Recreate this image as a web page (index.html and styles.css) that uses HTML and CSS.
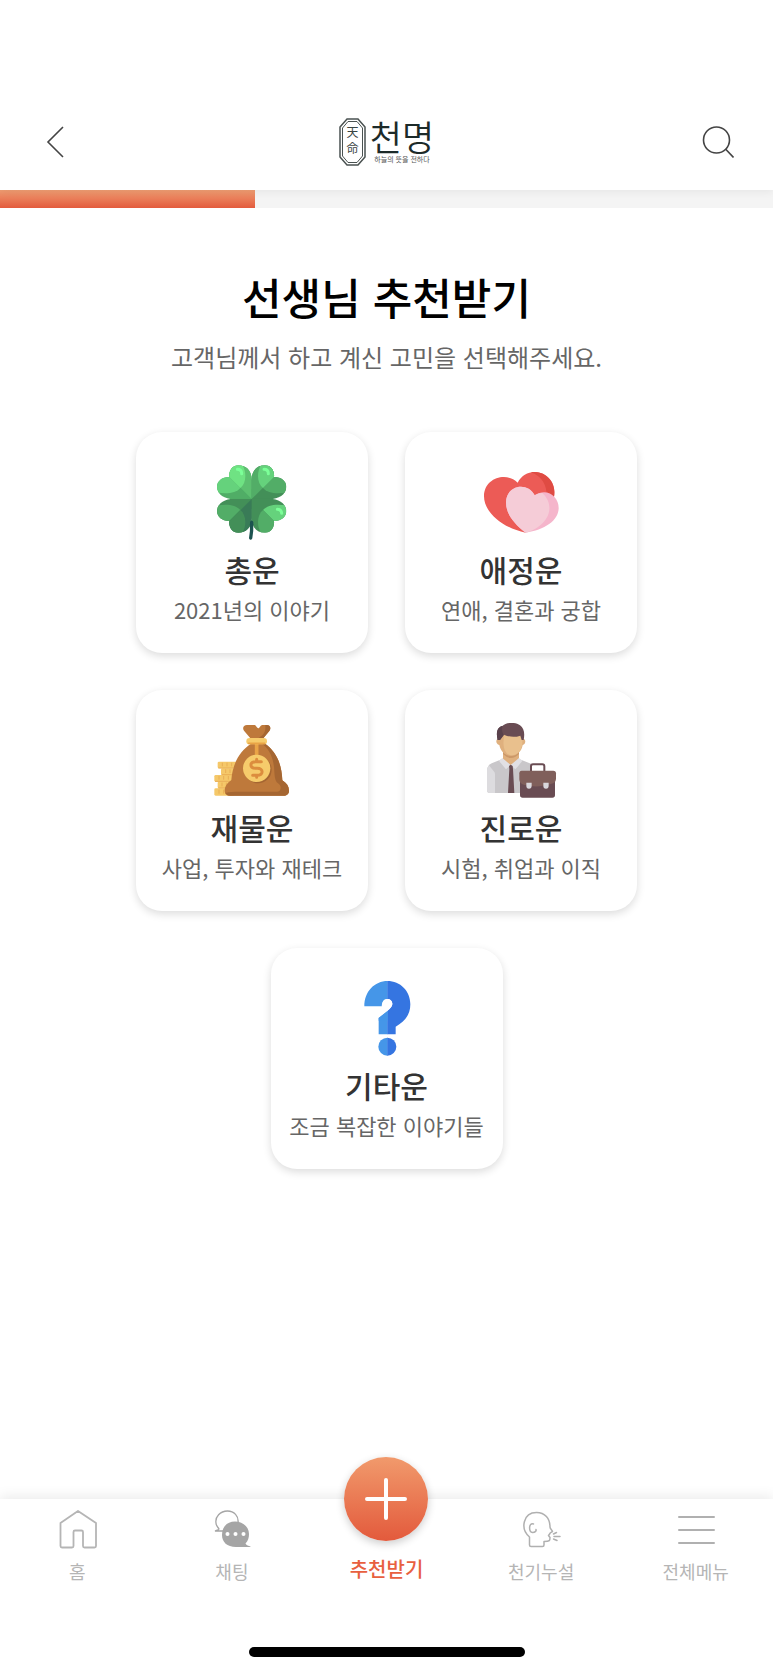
FILE: index.html
```
<!DOCTYPE html>
<html lang="ko">
<head>
<meta charset="utf-8">
<meta name="viewport" content="width=device-width, initial-scale=1">
<title>천명 - 선생님 추천받기</title>
<link rel="stylesheet" href="styles.css">
</head>
<body>
<header class="header">
  <button class="icon-button" type="button" aria-label="뒤로">
    <svg width="32" height="32" viewBox="0 0 32 32" fill="none" stroke="#444" stroke-width="1.6"><path d="M24 1 9 16 24 31"/></svg>
  </button>
  <a class="logo" href="#" aria-label="천명">
    <svg class="logo-emblem" width="27" height="48" viewBox="0 0 27 48" fill="none" stroke="#4a5251">
      <path d="M8 1h11l7 8v30l-7 8H8l-7-8V9z" stroke-width="1.500"/>
      <path d="M9 3.500h9l5.500 6.500v28L18 44.500H9L3.500 38V10z" stroke-width="1"/>
      <text class="logo-hanja" x="13.500" y="19">天</text>
      <text class="logo-hanja" x="13.500" y="35">命</text>
    </svg>
    <span class="logo-words">
      <span class="logo-name">천명</span>
      <span class="logo-tagline">하늘의 뜻을 전하다</span>
    </span>
  </a>
  <button class="icon-button" type="button" aria-label="검색">
    <svg width="32" height="32" viewBox="0 0 32 32" fill="none" stroke="#444" stroke-width="1.600"><circle cx="14.500" cy="14" r="13"/><path d="m23.500 23 8 8.500"/></svg>
  </button>
</header>
<div class="progress" role="progressbar" aria-valuenow="33" aria-valuemin="0" aria-valuemax="100" aria-label="진행률"><div class="progress-fill" style="width:33%"></div></div>

<main class="main">
  <h1 class="title">선생님 추천받기</h1>
  <p class="subtitle">고객님께서 하고 계신 고민을 선택해주세요.</p>
  <div class="cards">
    <button class="card" type="button">
      <svg class="card-icon" viewBox="270 135 225 225" aria-hidden="true">
        <defs>
          <path id="leaf" d="M380.500 237.500V180C380 150 362 136 340 136c-18 0-29 16-27 35-20-1-37 12-37 29 0 24 24 37 50 37.500z"/>
          <clipPath id="leafClip"><use href="#leaf"/></clipPath>
        </defs>
        <path fill="#4c9f62" d="M350 207h60v60h-60z"/>
        <g clip-path="url(#leafClip)"><path fill="#50ad66" d="M270 127h111v111H270z"/><path fill="#5dbf70" d="M270 127h111v111z"/><path fill="#65d27c" d="m304 162 42 42c-15 17-44 19-80 12v-54z"/><path fill="#6fe283" d="M304 162v-40h39c24 26 23 66 3 82z"/></g>
        <g transform="translate(760 0) scale(-1 1)" clip-path="url(#leafClip)"><path fill="#438f58" d="M270 127h111v111H270z"/><path fill="#52ad67" d="M270 127h111v111z"/><path fill="#52ad67" d="m304 162 42 42c-15 17-44 19-80 12v-54z"/><path fill="#65d27c" d="M304 162v-40h39c24 26 23 66 3 82z"/></g>
        <g transform="translate(0 474) scale(1 -1)" clip-path="url(#leafClip)"><path fill="#438f58" d="M270 127h111v111H270z"/><path fill="#397b57" d="M270 127h111v111z"/><path fill="#52ad67" d="m304 162 42 42c-15 17-44 19-80 12v-54z"/><path fill="#438f58" d="M304 162v-40h39c24 26 23 66 3 82z"/></g>
        <g transform="translate(760 474) scale(-1 -1)" clip-path="url(#leafClip)"><path fill="#438f58" d="M270 127h111v111H270z"/><path fill="#65d27c" d="m304 162 42 42c-15 17-44 19-80 12v-54z"/><path fill="#52ad67" d="M304 162v-40h39c24 26 23 66 3 82z"/></g>
        <g fill="none" stroke="#7cff98" stroke-width="9" stroke-linecap="round"><path d="M337 148q13 0 13 13M417 148q13 0 13 13M457 268q12 0 13 12"/></g>
        <path fill="none" stroke="#1d5350" stroke-width="10" stroke-linecap="round" d="M380 307q1 26-3 47"/><path fill="#1d5350" d="m374 315 6-15 5 15z"/>
      </svg>
      <span class="card-title">총운</span><span class="card-text">2021년의 이야기</span>
    </button>
    <button class="card" type="button">
      <svg class="card-icon" viewBox="267 135 225 225" aria-hidden="true">
        <path fill="#ec5b56" d="M392 338C320 323 267 276 267 229c0-55 67-75 101-41 10-20 30-32 51-32 39 0 66 35 58 75z"/>
        <path fill="#df4b43" d="M407 157c45-7 78 31 70 74h-22c2-34-15-64-48-74z"/>
        <path fill="#f5b5cb" d="M392 338c-38-29-59-58-59-91 0-51 64-64 86-21 37-24 72 4 72 38 0 38-43 66-99 74z"/>
        <path fill="#f5ccd7" d="M392 338c-38-29-59-58-59-91 0-51 64-64 86-21 8-5 15-7 23-7 46 44 12 103-50 119z"/>
      </svg>
      <span class="card-title">애정운</span><span class="card-text">연애, 결혼과 궁합</span>
    </button>
    <button class="card" type="button">
      <svg class="card-icon" viewBox="270 129 225 225" aria-hidden="true" overflow="visible">
        <g fill="#f5c869"><rect x="278" y="245" width="60" height="20" rx="4"/><rect x="288" y="265" width="60" height="20" rx="4"/><rect x="268" y="285" width="60" height="20" rx="4"/><rect x="278" y="305" width="60" height="20" rx="4"/><rect x="268" y="325" width="60" height="22" rx="4"/></g>
        <path fill="none" stroke="#e9ae55" stroke-width="3" d="M280 264h45M290 284h35M270 304h45M280 324h35M292 248v11M306 248v11M320 248v11M302 268v11M315 268v11M282 288v11M296 288v11M310 288v11M291 308v11M304 308v11M282 329v12M296 329v12"/>
        <path fill="#be793b" d="M380 190h38c38 26 52 64 54 111 13 8 20 18 20 31 0 10-7 15-16 15H315c-10 0-16-6-16-15 0-13 8-23 20-32 4-49 24-86 61-110z"/>
        <path fill="#a56632" d="M410 190h8c38 26 52 64 54 111 13 8 20 18 20 31 0 10-7 15-16 15H315c-6 0-11-3-14-8 12-4 25-4 38-4h116c14 0 16-17 4-25-11-7-10-28-12-49-4-34-16-54-37-71z"/>
        <path fill="#be793b" d="m378 177-21-25c-6-8-1-17 9-17h23c4 0 7 10 11 10s6-10 12-10h13c11 0 14 10 8 18l-20 24z"/>
        <path fill="#a56632" d="M421 135h5c10 0 13 10 7 18l-20 24h-16c17-12 26-18 24-42z"/>
        <path stroke="#e9a346" stroke-width="11" d="M395 188v45"/>
        <rect x="364" y="174" width="62" height="19" rx="9.500" fill="#f6cb6b"/><path stroke="#e9a346" stroke-width="5" stroke-linecap="round" d="M371 190h48"/>
        <circle cx="399" cy="269" r="41" fill="#a56632"/><circle cx="395" cy="265" r="41" fill="#f6cb6b"/>
        <path fill="none" stroke="#dc8d3e" stroke-width="9" stroke-linecap="round" stroke-linejoin="round" d="M395 238v6M395 286v6M409 245h-17c-19 0-19 20 0 20h5c19 0 19 21 0 21h-14"/>
      </svg>
      <span class="card-title">재물운</span><span class="card-text">사업, 투자와 재테크</span>
    </button>
    <button class="card" type="button">
      <svg class="card-icon" viewBox="267 129 225 225" aria-hidden="true">
        <path fill="#c9c7ca" d="m322 237-32 13c-9 4-14 12-14 23v58c0 5 3 8 8 8h126v-87l-38-15z"/>
        <path fill="#dddcdf" d="M282 256c-4 5-6 10-6 17v58c0 5 3 8 8 8h16v-57q0-6-5-10z"/>
        <path fill="#dfb07e" d="M324 212h48v29l-25 15-23-16z"/><path fill="#cc9868" d="M324 222q24 24 48 0v-10h-48z"/>
        <path fill="#dfb07e" d="M312 176c-11-1-11 17 1 19 4 19 18 33 35 33s32-14 35-33c11-3 10-20 0-19l-18-17-44 4z"/>
        <path fill="#e9c08d" d="M328 166h53c7 35-9 60-31 60-19 0-30-26-22-60z"/>
        <path fill="#694c53" d="M308 180c-6-25 0-39 14-42 10-11 40-13 53-2 12 8 15 24 11 44h-6l-4-13c-18 6-33 4-49-3l-12 16z"/>
        <path fill="#59414b" d="M308 180c-6-25 0-39 14-42q-3 16 4 27l-11 15z"/>
        <path fill="#e1e0e4" d="m322 234 25 21-14 13c-7-8-14-17-21-26zm50 0-25 21 14 13c8-8 14-17 21-26z"/>
        <path fill="#694c53" d="m342 258 5-4 6 4 1 9 4 72h-19l4-72z"/>
        <path fill="#fff" d="M408 257h40v20h-40z"/>
        <path fill="none" stroke="#694c53" stroke-width="6" d="M408 276v-17q0-6 6-6h28q6 0 6 6v17"/>
        <rect x="375" y="290" width="105" height="63" rx="8" fill="#694c53"/>
        <path fill="#805f5b" d="M380 272h95q8 0 8 8v15c0 12-7 15-18 18-26 7-48 8-72 3-13-3-20-7-20-20v-16q0-8 7-8z"/>
        <path fill="#d9d7dc" d="M394 308h16v9q0 9-8 9t-8-9zm51 0h16v9q0 9-8 9t-8-9z"/>
      </svg>
      <span class="card-title">진로운</span><span class="card-text">시험, 취업과 이직</span>
    </button>
    <button class="card" type="button">
      <svg class="card-icon" viewBox="268 121 225 225" aria-hidden="true">
        <path fill="#4596e8" d="M384 121c-40 0-70 32-70 76h54c-1-14 5-22 16-22v36l-27 21v49h27z"/>
        <path fill="#3575e1" d="M383 121c39 0 69 30 69 70 0 32-16 50-44 67v23h-25v-71c10-8 15-14 15-20 0-9-6-15-15-15z"/>
        <path fill="#fff" d="M382 175c9 0 16 6 16 15 0 6-4 12-14 20l-18 14V200c0-16 6-25 16-25z"/>
        <path fill="#4596e8" d="M357 232 384 210v30h-27z"/>
        <path fill="#4596e8" d="M384 291h-1a27 27 0 0 0 0 54h1z"/><path fill="#3575e1" d="M383 291a27 27 0 0 1 0 54z"/>
      </svg>
      <span class="card-title">기타운</span><span class="card-text">조금 복잡한 이야기들</span>
    </button>
  </div>
</main>

<footer class="footer">
  <nav class="nav">
    <a class="nav-item" href="#">
      <svg width="40" height="40" viewBox="0 0 40 40" fill="none" stroke="#b5b5b5" stroke-width="1.800" stroke-linejoin="round"><path d="M21 2 3.500 14v23q0 1.500 1.500 1.500h10q1.500 0 1.500-1.500V23q0-1.500 1.500-1.500h6.500q1.500 0 1.500 1.500v14q0 1.500 1.500 1.500h10q1.500 0 1.500-1.500V14z"/></svg>
      <span>홈</span>
    </a>
    <a class="nav-item" href="#">
      <svg width="40" height="40" viewBox="0 0 40 40"><path d="M26 14C27 7 22 2 15.500 2 8 2 3 8 4 14c0 3 2 4 3 6 0 1-2 1-4 2h8" fill="none" stroke="#a5a5a5" stroke-width="1.300"/><path fill="#a5a5a5" d="M23 12.500c8 0 14 5.500 14 12.500 0 4-1 7-3.500 9.500 1 2 3 2.500 5 3V38H24C15 38 10 33 10 26c0-8 5-13.500 13-13.500z"/><g fill="#fff"><circle cx="15.500" cy="25" r="2"/><circle cx="23.500" cy="25" r="2"/><circle cx="31.500" cy="25" r="2"/></g></svg>
      <span>채팅</span>
    </a>
    <a class="nav-item nav-item-active" href="#" aria-current="page">
      <span class="fab"><svg width="42" height="42" viewBox="0 0 42 42" fill="none" stroke="#fff" stroke-width="4" stroke-linecap="round"><path d="M21 2v38M2 21h38"/></svg></span>
      <span>추천받기</span>
    </a>
    <a class="nav-item" href="#">
      <svg width="40" height="40" viewBox="0 0 40 40" fill="none" stroke="#b0b0b0" stroke-width="1.500" stroke-linejoin="round" stroke-linecap="round"><path d="M8.500 28C-1 20 2 3.500 15.500 3.500 24 3.500 29 9.500 29 18c0 2 2 2.500 2.500 4.500-1 1-2.500 1-2.500 2l-1.500 2 1.500 2c0 3 0 4-6 4V36q0 1.500-1.500 1.500H10q-1.500 0-1.500-1.500zM12.500 15c-5-2-5 8-1 8.500 3 0 4-2 3.500-3M32.500 25l3-1.500M33 27.500h6M32.500 30l3.500 1.500"/></svg>
      <span>천기누설</span>
    </a>
    <a class="nav-item" href="#">
      <svg width="40" height="40" viewBox="0 0 40 40" fill="none" stroke="#b0b0b0" stroke-width="2" stroke-linecap="round"><path d="M3 8h35M3 21h35M3 34h35"/></svg>
      <span>전체메뉴</span>
    </a>
  </nav>
  <div class="home-indicator"></div>
</footer>
</body>
</html>
```
FILE: styles.css
```
* { box-sizing: border-box; }

body {
  margin: 0;
  min-height: 100vh;
  display: flex;
  flex-direction: column;
  background: #fff;
  color: #333;
  font-family: "Noto Sans CJK KR", sans-serif;
}

button {
  border: 0;
  padding: 0;
  background: none;
  color: inherit;
  font-family: inherit;
  cursor: pointer;
}

a { color: inherit; text-decoration: none; }
svg { display: block; }

.header {
  position: relative;
  z-index: 1;
  display: flex;
  align-items: center;
  justify-content: space-between;
  padding: 93px 39px 0;
  height: 190px;
  background: #fff;
  box-shadow: 0 2px 8px rgba(0, 0, 0, 0.06);
}

.logo { display: flex; align-items: center; gap: 4px; color: #1c2a29; }
.logo-hanja { font-size: 12px; text-anchor: middle; fill: #3a4443; stroke: none; }
.logo-words { display: flex; flex-direction: column; align-items: center; gap: 3px; }
.logo-name { font-size: 35px; line-height: 32px; font-weight: 350; }
.logo-tagline { font-size: 7px; line-height: 8px; color: #555; white-space: nowrap; }

.progress { height: 18px; background: #f4f4f4; }
.progress-fill { height: 100%; background: linear-gradient(#f09d72, #e35b3d); }

.main { flex: 1; padding: 60px 24px 40px; text-align: center; }
.title { margin: 0; font-size: 43px; line-height: 56px; font-weight: 500; color: #000; }
.subtitle { margin: 15px 0 57px; font-size: 24px; line-height: 36px; color: #666; }

.cards {
  display: flex;
  flex-wrap: wrap;
  justify-content: center;
  gap: 37px;
  max-width: 501px;
  margin: 0 auto;
}

.card {
  display: flex;
  flex-direction: column;
  align-items: center;
  width: 232px;
  padding: 33px 0 24px;
  border-radius: 26px;
  background: #fff;
  box-shadow: 0 3px 8px rgba(0, 0, 0, 0.14);
}

.card-icon { width: 75px; height: 75px; }
.card-title { margin-top: 9px; font-size: 30px; line-height: 40px; font-weight: 500; }
.card-text { font-size: 22px; line-height: 40px; color: #666; white-space: nowrap; }

.footer { background: #fff; box-shadow: 0 -3px 12px rgba(0, 0, 0, 0.08); }
.nav { display: grid; grid-template-columns: repeat(5, 1fr); height: 100px; }

.nav-item {
  position: relative;
  display: flex;
  flex-direction: column;
  align-items: center;
  justify-content: flex-end;
  gap: 8px;
  padding-bottom: 14px;
  font-size: 18px;
  line-height: 28px;
  color: #b5b5b5;
}

.nav-item-active { padding-bottom: 16px; font-size: 20px; font-weight: 500; color: #e8603f; }

.fab {
  position: absolute;
  top: -42px;
  left: 50%;
  display: flex;
  align-items: center;
  justify-content: center;
  width: 84px;
  height: 84px;
  margin-left: -42px;
  border-radius: 50%;
  background: linear-gradient(#f19a6c, #e35a3c);
  box-shadow: 0 3px 8px rgba(0, 0, 0, 0.2);
}

.home-indicator { width: 276px; height: 10px; margin: 48px auto 16px; border-radius: 5px; background: #000; }
```
